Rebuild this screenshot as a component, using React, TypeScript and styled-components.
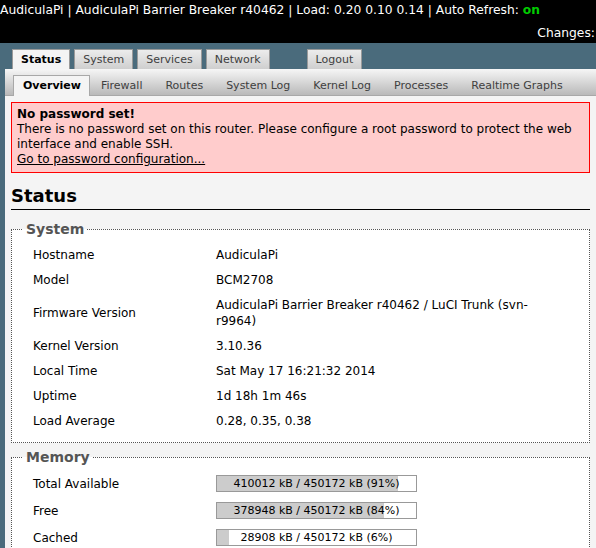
import React from 'react';
import styled, { createGlobalStyle } from 'styled-components';

const GlobalStyle = createGlobalStyle`
    body {
        margin: 0;
        background-color: #4a6b7c;
        font-family: "DejaVu Sans", Verdana, sans-serif;
        font-size: 12px;
        color: #000000;
    }
`;

const Header = styled.header`
    background-color: #000000;
    color: #FFFFFF;
    height: 43px;
    font-size: 12.3px;
    line-height: 16px;
    padding-top: 2px;
    box-sizing: border-box;
    overflow: hidden;
`;

const HeaderLine = styled.div<{ $right?: boolean }>`
    white-space: nowrap;
    text-align: ${props => (props.$right ? 'right' : 'left')};
    margin-top: ${props => (props.$right ? '7px' : '0')};
    padding-right: ${props => (props.$right ? '1px' : '0')};
`;

const On = styled.span`
    color: #00cc00;
    font-weight: bold;
`;

const TabBar = styled.nav`
    display: flex;
    gap: 4px;
    padding: 6px 0 0 12px;
    height: 26px;
    box-sizing: border-box;
    font-size: 11px;
`;

const Tab = styled.div<{ $active?: boolean; $gapBefore?: boolean }>`
    flex-shrink: 0;
    white-space: nowrap;
    padding: 0 8px;
    line-height: 19px;
    border: 1px solid #9a9a9a;
    border-bottom: none;
    background: ${props => (props.$active ? '#f4f4f4' : 'linear-gradient(#ececec, #cfcfcf)')};
    color: ${props => (props.$active ? '#000000' : '#404040')};
    font-weight: ${props => (props.$active ? 'bold' : 'normal')};
    margin-left: ${props => (props.$gapBefore ? '33px' : '0')};
`;

const Content = styled.main`
    margin-left: 5px;
    background-color: #f4f4f4;
    min-height: 600px;
`;

const SubBar = styled.div`
    display: flex;
    align-items: flex-end;
    height: 26px;
    padding-left: 8px;
    background: linear-gradient(#f6f6f6, #b9b9b9);
    border-bottom: 1px solid #a8a8a8;
    font-size: 11px;
`;

const SubTab = styled.div<{ $active?: boolean }>`
    flex-shrink: 0;
    white-space: nowrap;
    padding: ${props => (props.$active ? '0 8px 0 9px' : '0 11px 0 10px')};
    line-height: 20px;
    margin-bottom: -1px;
    color: ${props => (props.$active ? '#000000' : '#404040')};
    font-weight: ${props => (props.$active ? 'bold' : 'normal')};
    background: ${props => (props.$active ? '#f4f4f4' : 'transparent')};
    border: 1px solid ${props => (props.$active ? '#a8a8a8' : 'transparent')};
    border-bottom: none;
`;

const Page = styled.div`
    padding: 6px 6px 0 6px;
`;

const Warning = styled.div`
    background-color: #ffcccc;
    border: 1px solid #ff0000;
    padding: 4px 5px 5px;
    line-height: 15px;
    color: #000000;

    strong {
        display: block;
    }

    a {
        color: #000000;
    }
`;

const Title = styled.h2`
    font-size: 18px;
    line-height: 22px;
    margin: 12px 0 0 0;
    padding-bottom: 2px;
    border-bottom: 1px solid #000000;
`;

const Section = styled.fieldset<{ $first?: boolean }>`
    margin: ${props => (props.$first ? '11px 0 0 0' : '6px 0 0 0')};
    padding: 0 0 9px 11px;
    border: 1px dotted #555555;
    background-color: #FFFFFF;
`;

const Legend = styled.legend`
    padding: 0 3px;
    font-size: 14px;
    font-weight: bold;
    color: #555555;
`;

const Table = styled.table`
    border-collapse: collapse;
    margin: 5px 0 0 10px;
`;

const Cell = styled.td<{ $label?: boolean; $bar?: boolean }>`
    width: ${props => (props.$label ? '183px' : '330px')};
    padding: ${props => (props.$bar ? '5px 0' : '5px 0 4px')};
    line-height: 16px;
    vertical-align: middle;
`;

const Bar = styled.div`
    position: relative;
    width: 201px;
    height: 17px;
    box-sizing: border-box;
    border: 1px solid #999999;
    background-color: #FFFFFF;
    font-size: 11px;
    line-height: 15px;
    text-align: center;
`;

const BarFill = styled.div`
    position: absolute;
    left: 0;
    top: 0;
    bottom: 0;
    background-color: #cccccc;
`;

const BarText = styled.span`
    position: relative;
`;

const system: [string, string][] = [
    ['Hostname', 'AudiculaPi'],
    ['Model', 'BCM2708'],
    ['Firmware Version', 'AudiculaPi Barrier Breaker r40462 / LuCI Trunk (svn-r9964)'],
    ['Kernel Version', '3.10.36'],
    ['Local Time', 'Sat May 17 16:21:32 2014'],
    ['Uptime', '1d 18h 1m 46s'],
    ['Load Average', '0.28, 0.35, 0.38'],
];

const memory: [string, number][] = [
    ['Total Available', 410012],
    ['Free', 378948],
    ['Cached', 28908],
];

const TOTAL = 450172;

export default function App() {
    return (
        <>
            <GlobalStyle />
            <Header>
                <HeaderLine>
                    AudiculaPi | AudiculaPi Barrier Breaker r40462 | Load: 0.20 0.10 0.14 | Auto Refresh: <On>on</On>
                </HeaderLine>
                <HeaderLine $right>Changes:</HeaderLine>
            </Header>
            <TabBar>
                <Tab $active>Status</Tab>
                <Tab>System</Tab>
                <Tab>Services</Tab>
                <Tab>Network</Tab>
                <Tab $gapBefore>Logout</Tab>
            </TabBar>
            <Content>
                <SubBar>
                    <SubTab $active>Overview</SubTab>
                    <SubTab>Firewall</SubTab>
                    <SubTab>Routes</SubTab>
                    <SubTab>System Log</SubTab>
                    <SubTab>Kernel Log</SubTab>
                    <SubTab>Processes</SubTab>
                    <SubTab>Realtime Graphs</SubTab>
                </SubBar>
                <Page>
                    <Warning>
                        <strong>No password set!</strong>
                        There is no password set on this router. Please configure a root password to protect the web interface and enable SSH.
                        <br />
                        <a href="#">Go to password configuration...</a>
                    </Warning>
                    <Title>Status</Title>
                    <Section $first>
                        <Legend>System</Legend>
                        <Table>
                            <tbody>
                                {system.map(([label, value]) => (
                                    <tr key={label}>
                                        <Cell $label>{label}</Cell>
                                        <Cell>{value}</Cell>
                                    </tr>
                                ))}
                            </tbody>
                        </Table>
                    </Section>
                    <Section>
                        <Legend>Memory</Legend>
                        <Table>
                            <tbody>
                                {memory.map(([label, used]) => {
                                    const pct = Math.round((used / TOTAL) * 100);
                                    return (
                                        <tr key={label}>
                                            <Cell $label $bar>{label}</Cell>
                                            <Cell $bar>
                                                <Bar>
                                                    <BarFill style={{ width: `${pct}%` }} />
                                                    <BarText>{used} kB / {TOTAL} kB ({pct}%)</BarText>
                                                </Bar>
                                            </Cell>
                                        </tr>
                                    );
                                })}
                            </tbody>
                        </Table>
                    </Section>
                </Page>
            </Content>
        </>
    );
}
